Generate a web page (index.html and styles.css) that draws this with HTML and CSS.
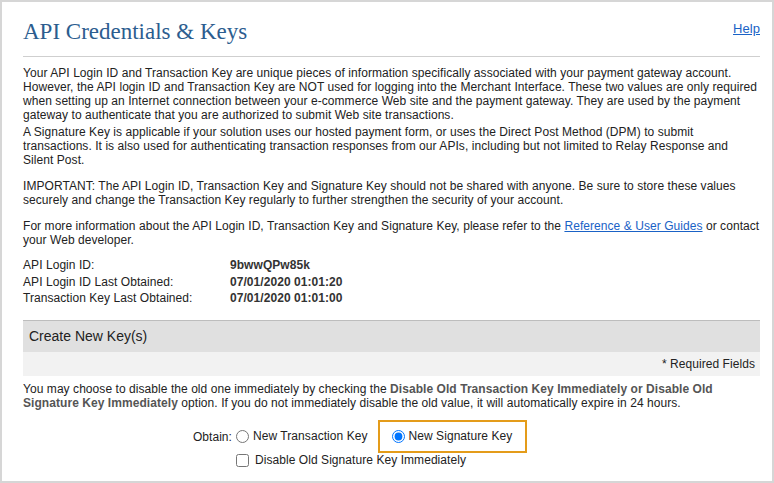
FILE: index.html
```html
<!DOCTYPE html>
<html lang="en">

<head>
    <meta charset="UTF-8">
    <meta name="viewport" content="width=device-width, initial-scale=1.0">
    <title>API Credentials &amp; Keys</title>
    <link rel="stylesheet" href="styles.css">
</head>

<body>
    <div id="page">
        <div class="page-head">
            <h1 class="page-title">API Credentials &amp; Keys</h1>
            <a class="help-link" href="#">Help</a>
        </div>

        <div class="intro">
            <p class="intro-first">Your API Login ID and Transaction Key are unique pieces of information specifically associated with your payment gateway account. However, the API login ID and Transaction Key are NOT used for logging into the Merchant Interface. These two values are only required when setting up an Internet connection between your e-commerce Web site and the payment gateway. They are used by the payment gateway to authenticate that you are authorized to submit Web site transactions.</p>
            <p class="intro-tight">A Signature Key is applicable if your solution uses our hosted payment form, or uses the Direct Post Method (DPM) to submit transactions. It is also used for authenticating transaction responses from our APIs, including but not limited to Relay Response and Silent Post.</p>
            <p>IMPORTANT: The API Login ID, Transaction Key and Signature Key should not be shared with anyone. Be sure to store these values securely and change the Transaction Key regularly to further strengthen the security of your account.</p>
            <p>For more information about the API Login ID, Transaction Key and Signature Key, please refer to the <a href="#">Reference &amp; User Guides</a> or contact your Web developer.</p>
        </div>

        <div class="key-info">
            <div class="key-label">API Login ID:</div>
            <div class="key-value">9bwwQPw85k</div>
            <div class="key-label">API Login ID Last Obtained:</div>
            <div class="key-value">07/01/2020 01:01:20</div>
            <div class="key-label">Transaction Key Last Obtained:</div>
            <div class="key-value">07/01/2020 01:01:00</div>
        </div>

        <div class="section-head">Create New Key(s)</div>
        <div class="required-note">* Required Fields</div>

        <p class="disable-note">You may choose to disable the old one immediately by checking the <b>Disable Old Transaction Key Immediately or Disable Old Signature Key Immediately</b> option. If you do not immediately disable the old value, it will automatically expire in 24 hours.</p>

        <div class="obtain">
            <div class="obtain-label">Obtain:</div>
            <div class="obtain-options">
                <div class="radio-row">
                    <label class="option"><input type="radio" name="keytype"> New Transaction Key</label>
                    <label class="option option-selected"><input type="radio" name="keytype" checked> New Signature Key</label>
                </div>
                <label class="option check-row"><input type="checkbox"> Disable Old Signature Key Immediately</label>
            </div>
        </div>
    </div>
</body>

</html>
```

FILE: styles.css
```css
html,
body {
    margin: 0;
    padding: 0;
    background-color: #fff;
}

#page {
    box-sizing: border-box;
    width: 774px;
    height: 483px;
    border: 2px solid #d6d6d6;
    padding: 16px 12px 0 21px;
    font-family: "Liberation Sans", Arial, sans-serif;
    font-size: 12px;
    letter-spacing: 0.06px;
    color: #222;
    overflow: hidden;
}

.page-head {
    display: flex;
    justify-content: space-between;
    align-items: flex-start;
    padding-bottom: 10px;
    border-bottom: 1px solid #cfcfcf;
}

.page-title {
    margin: 0;
    font-family: "Liberation Serif", Georgia, serif;
    font-size: 23px;
    line-height: 28px;
    font-weight: normal;
    letter-spacing: 0;
    color: #2c5d8f;
}

.help-link {
    margin-top: 3px;
    font-size: 13px;
    line-height: 15px;
    color: #1a62c6;
}

a {
    color: #1a62c6;
}

.intro {
    margin-top: 9px;
}

.intro p {
    margin: 12px 0 0;
}

.intro .intro-first {
    margin-top: 0;
}

.intro .intro-tight {
    margin-top: 3px;
}

.key-info {
    display: grid;
    grid-template-columns: 207px auto;
    margin-top: 10px;
    line-height: 16.5px;
}

.key-value {
    font-weight: bold;
    color: #333;
}

.section-head {
    margin-top: 13px;
    height: 31px;
    line-height: 31px;
    padding-left: 6px;
    border-top: 1px solid #bdbdbd;
    background-color: #e0e0e0;
    font-size: 14px;
    letter-spacing: 0;
    color: #222;
}

.required-note {
    height: 24px;
    line-height: 24px;
    padding-right: 5px;
    text-align: right;
    background-color: #f2f2f2;
}

.disable-note {
    margin: 6px 0 0;
}

.disable-note b {
    color: #555;
}

.obtain {
    display: flex;
    margin-top: 10px;
}

.obtain-label {
    width: 209px;
    text-align: right;
    line-height: 34px;
}

.obtain-options {
    margin-left: 4px;
}

.radio-row {
    display: flex;
    align-items: center;
    height: 34px;
}

.option {
    display: inline-flex;
    align-items: center;
    line-height: 15px;
}

.option input {
    margin: 0 4px 0 0;
    width: 13px;
    height: 13px;
}

.option-selected {
    margin-left: 10px;
    padding: 7px 13px 7px 12px;
    border: 2px solid #e49c1a;
}

.check-row {
    line-height: 13px;
}

.check-row input {
    margin-right: 6px;
}
```
